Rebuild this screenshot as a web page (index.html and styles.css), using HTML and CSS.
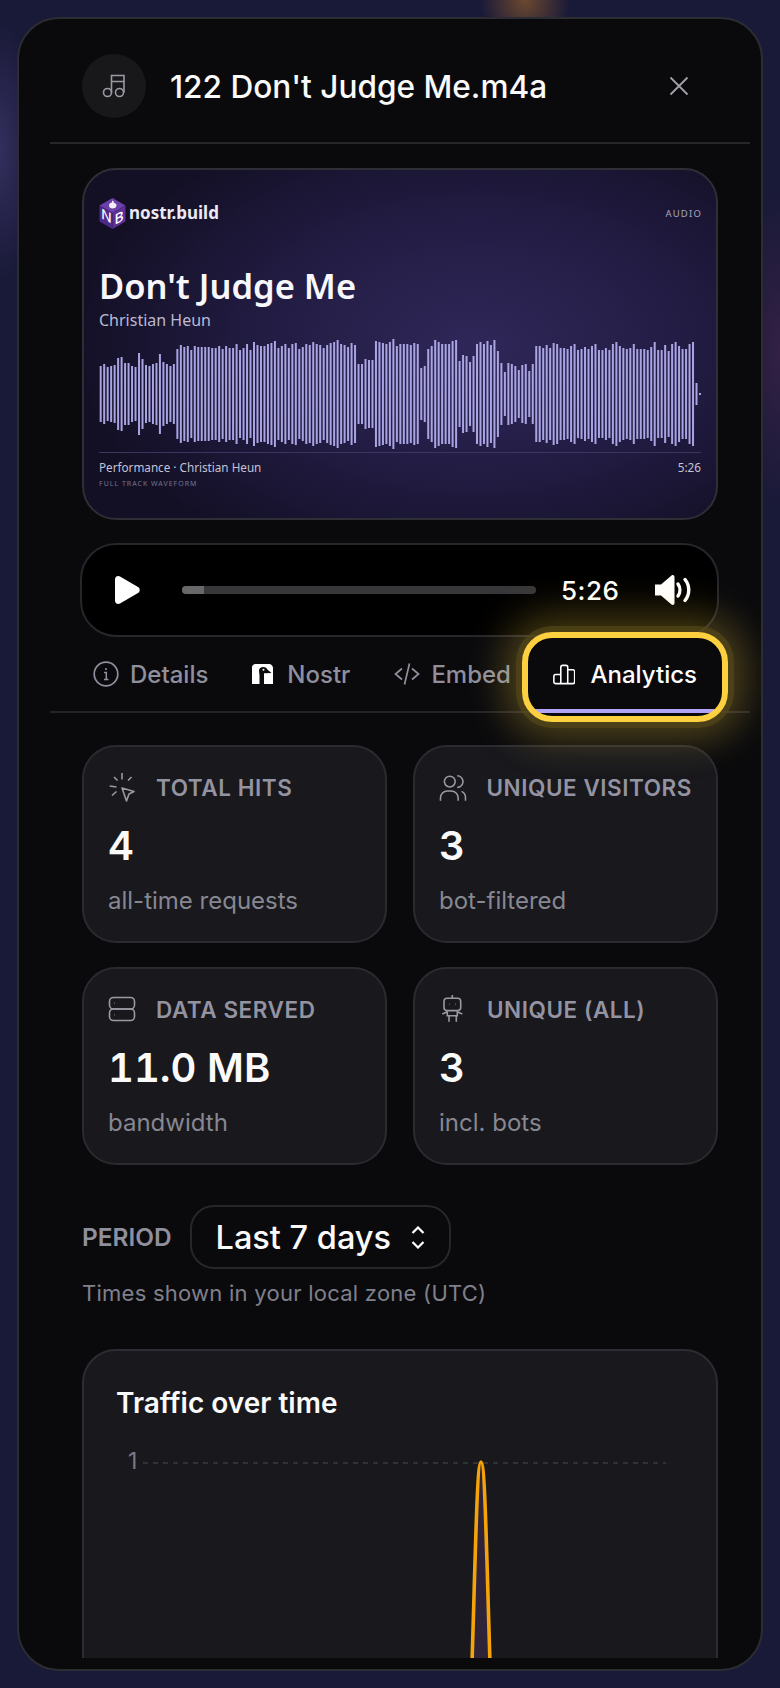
FILE: index.html
```html
<!DOCTYPE html>
<html lang="en">

<head>
    <meta charset="UTF-8">
    <meta name="viewport" content="width=device-width, initial-scale=1.0">
    <title>122 Don't Judge Me.m4a</title>
    <link rel="stylesheet" href="styles.css">
</head>

<body>
    <div class="modal">
        <div class="modal-head">
            <div class="file-icon">
                <svg width="24" height="24" viewBox="0 0 24 24" fill="none" stroke="#9a9aa3" stroke-width="1.6">
                    <circle cx="5.5" cy="18.5" r="4" />
                    <circle cx="17.5" cy="18.5" r="4" />
                    <path d="M9.5 18.5V1.5H22V18.5M9.5 7.5H22" />
                </svg>
            </div>
            <h1 class="file-name">122 Don't Judge Me.m4a</h1>
            <svg class="close" width="20" height="20" viewBox="0 0 20 20" fill="none" stroke="#a1a1aa" stroke-width="1.8">
                <path d="M1.5 1.5L18.5 18.5M18.5 1.5L1.5 18.5" />
            </svg>
        </div>

        <div class="modal-body">
            <!-- preview card -->
            <div class="preview">
                <div class="preview-top">
                    <div class="brand">
                        <svg width="27" height="31" viewBox="0 0 27 31">
                            <path d="M13.5 0L26.5 7.5L13.5 15L.5 7.5z" fill="#6d3fa8" />
                            <path d="M.5 7.5L13.5 15V31L.5 23.5z" fill="#4c2a86" />
                            <path d="M26.5 7.5L13.5 15V31L26.5 23.5z" fill="#5d2f96" />
                            <path d="M10 7.5C10 5.5 11.5 4.5 13 4.5V2.5L15 3.500 14.500 4.700C16.500 5 17.500 6 17.500 7.500 17.500 9.500 15.500 10.500 13.500 10.500S10 9.500 10 7.500z" fill="#f1eef8" />
                            <text class="logo-letter" transform="translate(2 20) skewY(28)">N</text>
                            <text class="logo-letter" transform="translate(15.500 27) skewY(-28)">B</text>
                        </svg>
                        <span>nostr.build</span>
                    </div>
                    <span class="kind">AUDIO</span>
                </div>
                <div class="track-title">Don't Judge Me</div>
                <div class="track-artist">Christian Heun</div>
                <svg id="wave" class="wave" width="604" height="114" viewBox="0 0 604 114"></svg>
                <div class="preview-foot">
                    <span>Performance · Christian Heun</span>
                    <span>5:26</span>
                </div>
                <div class="preview-note">FULL TRACK WAVEFORM</div>
            </div>

            <!-- audio player -->
            <div class="player">
                <svg class="play" width="25" height="28" viewBox="0 0 25 28">
                    <path d="M0 3.500C0 .8 2.600-.9 5 .5L23 11C25.300 12.400 25.300 15.600 23 17L5 27.500C2.600 28.900 0 27.200 0 24.500z" fill="#fff" />
                </svg>
                <div class="seek">
                    <div class="seek-done"></div>
                </div>
                <span class="time">5:26</span>
                <svg class="volume" width="37" height="30" viewBox="0 0 37 30" fill="none">
                    <path d="M0 9.500H6L16.500 .5C18 -.5 19.500 .3 19.500 2V28C19.500 29.700 18 30.500 16.500 29.500L6 20.500H0z" fill="#fff" />
                    <path d="M23 9C25.500 12.500 25.500 17.500 23 21" stroke="#fff" stroke-width="3.400" stroke-linecap="round" />
                    <path d="M30 4.500C35 10.500 35 19.500 30 25.500" stroke="#fff" stroke-width="3.400" stroke-linecap="round" />
                </svg>
            </div>

            <!-- tabs -->
            <div class="tabs">
                <div class="tab">
                    <svg width="26" height="26" viewBox="0 0 26 26" fill="none" stroke="currentColor" stroke-width="1.700">
                        <circle cx="13" cy="13" r="11.800" />
                        <path d="M11 11.500H13.300V18.500M11 18.500H15.500" stroke-width="1.500" />
                        <circle cx="13" cy="8" r="1.100" fill="currentColor" stroke="none" />
                    </svg>
                    <span>Details</span>
                </div>
                <div class="tab tab-nostr">
                    <svg width="21" height="20" viewBox="0 0 21 20">
                        <path d="M0 20V3.500C0 1.500 1.500 0 3.500 0H17C19.200 0 21 1.800 21 4V20z" fill="#fff" />
                        <path d="M7.500 20V12C7.500 10 7 8.500 7 6.500 7 4.300 9 3 11.200 3 13.400 3 15 4.200 15.600 5.800L19.500 9 12 9.200V20z" fill="#0a0a0d" />
                        <circle cx="11.500" cy="5.800" r="1" fill="#fff" />
                    </svg>
                    <span>Nostr</span>
                </div>
                <div class="tab">
                    <svg width="26" height="26" viewBox="0 0 26 26" fill="none" stroke="currentColor" stroke-width="1.700">
                        <path d="M8 7.500L1.500 13L8 18.500M18 7.500L24.500 13L18 18.500M15.500 2.500L10.500 23.500" />
                    </svg>
                    <span>Embed</span>
                </div>
                <div class="tab tab-on">
                    <svg width="26" height="23" viewBox="0 0 26 23" fill="none" stroke="#fff" stroke-width="1.800">
                        <path d="M9 11.500H3C1.800 11.500 1 12.300 1 13.500V20C1 21.200 1.800 22 3 22H23C24.200 22 25 21.200 25 20V8C25 6.800 24.200 6 23 6H17M9 22V3C9 1.800 9.800 1 11 1H15C16.200 1 17 1.800 17 3V22" />
                    </svg>
                    <span>Analytics</span>
                </div>
            </div>

            <!-- stats -->
            <div class="stats">
                <div class="stat">
                    <div class="stat-label">
                        <svg width="30" height="30" viewBox="0 0 30 30" fill="none" stroke="#9a9aa3" stroke-width="1.600">
                            <path d="M14 1V7.500M20 8.500L23.500 5M1.700 14L8.500 15M4 23.500L8.500 19.500M6 5L9.500 8.500" />
                            <path d="M14 16L26 19.500 21 22 18.500 29z" stroke-linejoin="round" />
                        </svg>
                        <span>TOTAL HITS</span>
                    </div>
                    <div class="stat-value">4</div>
                    <div class="stat-sub">all-time requests</div>
                </div>
                <div class="stat">
                    <div class="stat-label">
                        <svg width="30" height="30" viewBox="0 -2 30 30" fill="none" stroke="#9a9aa3" stroke-width="1.600">
                            <circle cx="11" cy="7.500" r="5.500" />
                            <path d="M18.500 1.500A6 6 0 0 1 18.500 13.500" />
                            <path d="M1.500 27V24A7 7 0 0 1 8.500 17H12.500A7 7 0 0 1 19.500 24V27" />
                            <path d="M23 17.500A7 7 0 0 1 27 24V27" />
                        </svg>
                        <span>UNIQUE VISITORS</span>
                    </div>
                    <div class="stat-value">3</div>
                    <div class="stat-sub">bot-filtered</div>
                </div>
                <div class="stat">
                    <div class="stat-label">
                        <svg width="30" height="30" viewBox="0 0 30 30" fill="none" stroke="#9a9aa3" stroke-width="1.600">
                            <rect x="1.500" y="3.500" width="25" height="11.500" rx="4" />
                            <rect x="1.500" y="15" width="25" height="11.500" rx="4" />
                            <path d="M6.500 9.300H7M6.500 20.800H7" />
                        </svg>
                        <span>DATA SERVED</span>
                    </div>
                    <div class="stat-value">11.0 MB</div>
                    <div class="stat-sub">bandwidth</div>
                </div>
                <div class="stat">
                    <div class="stat-label">
                        <svg width="30" height="30" viewBox="0 0 30 30" fill="none" stroke="#9a9aa3" stroke-width="1.600">
                            <rect x="5" y="4.300" width="16.700" height="12.300" rx="3" />
                            <path d="M13.300 1V4.300M8.300 16.600V21.700H18.300V16.600M3.300 20L8.300 17.700M18.300 17.700L23.300 20M10 21.700V27.700M17.300 21.700V27.700" />
                            <path d="M10 10.200H10.400M16.300 10.200H16.700" stroke-width="2" />
                        </svg>
                        <span>UNIQUE (ALL)</span>
                    </div>
                    <div class="stat-value">3</div>
                    <div class="stat-sub">incl. bots</div>
                </div>
            </div>

            <!-- period -->
            <div class="period">
                <span class="period-label">PERIOD</span>
                <div class="period-select">
                    <span>Last 7 days</span>
                    <svg width="14" height="23" viewBox="0 0 14 23" fill="none" stroke="#fff" stroke-width="2.200">
                        <path d="M1.500 7L7 1.500L12.500 7M1.500 16L7 21.500L12.500 16" />
                    </svg>
                </div>
            </div>
            <p class="zone-note">Times shown in your local zone (UTC)</p>

            <!-- chart -->
            <div class="chart-card">
                <h2 class="chart-title">Traffic over time</h2>
                <div class="plot">
                    <span class="tick">1</span>
                    <svg class="chart" width="566" height="300" viewBox="0 0 566 300">
                        <path d="M27 14H550" stroke="#3a3a42" stroke-width="1.500" stroke-dasharray="5 5" />
                        <path d="M353 300C359 150 360 13 365 13C370 13 371 150 377 300z" fill="rgba(150,90,190,.18)" />
                        <path d="M353 300C359 150 360 13 365 13C370 13 371 150 377 300" fill="none" stroke="#f5a30a" stroke-width="3.600" />
                    </svg>
                </div>
            </div>
        </div>
    </div>

    <script>
        // half height of every bar, read off the track
        var bars = [28, 30, 27, 28, 29, 36, 37, 31, 31, 28, 27, 41, 35, 29, 28, 30, 31, 40, 32, 30, 28, 30,
            45, 49, 47, 48, 44, 48, 47, 47, 47, 47, 46, 46, 48, 45, 48, 46, 46, 50, 44, 46, 50, 44, 52, 49, 48, 48, 50, 51, 53, 46, 48, 50, 46, 50, 51, 45, 47, 50, 49, 52, 50, 49, 46, 49, 51, 52, 54, 50, 49, 47, 51, 49,
            30, 30, 35, 34, 34, 53, 52, 51, 50, 52, 55, 48, 50, 50, 50, 49, 51, 50, 26, 28, 45, 48, 54, 52, 50, 50, 50, 53, 54,
            33, 39, 38, 32, 38, 50, 52, 50, 53, 49, 54, 43, 31, 22, 31, 30, 28, 24, 29, 30, 23, 30,
            48, 48, 46, 49, 46, 51, 50, 46, 46, 45, 48, 50, 44, 45, 47, 45, 48, 50, 44, 44, 46, 44, 50, 52, 48, 46, 45, 46, 50, 45, 45, 45, 44, 47, 52, 44, 44, 49, 43, 50, 52, 48, 45, 45, 50, 52, 11, 1];
        var wave = document.getElementById("wave");
        var step = 599.3 / (bars.length - 1);
        var d = "";
        for (var i = 0; i < bars.length; i++) {
            var x = (1.7 + i * step).toFixed(2);
            d += "M" + x + " " + (57 - bars[i]) + "V" + (57 + bars[i]);
        }
        var path = document.createElementNS("http://www.w3.org/2000/svg", "path");
        path.setAttribute("d", d);
        path.setAttribute("stroke", "#a9a4e2");
        path.setAttribute("stroke-width", "2");
        path.setAttribute("fill", "none");
        wave.appendChild(path);
    </script>
</body>

</html>
```

FILE: styles.css
```css
* {
    margin: 0;
    padding: 0;
    box-sizing: border-box;
}

body {
    height: 1688px;
    overflow: hidden;
    padding: 17px;
    font-family: Inter, "Liberation Sans", sans-serif;
    background-color: #191938;
    background-image:
        radial-gradient(45px 50px at 525px 0, rgba(190, 120, 40, .5), transparent),
        radial-gradient(40px 130px at 0 150px, rgba(90, 80, 150, .4), transparent),
        radial-gradient(50px 160px at 780px 350px, rgba(110, 50, 100, .3), transparent);
}

.modal {
    width: 746px;
    height: 1654px;
    display: flex;
    flex-direction: column;
    background-color: #0a0a0d;
    border: 2px solid #2c2c33;
    border-radius: 42px;
    overflow: hidden;
}

.modal-head {
    width: 700px;
    margin-left: 31px;
    padding: 35px 61px 24px 32px;
    display: flex;
    align-items: center;
    gap: 24px;
    border-bottom: 2px solid #26262b;
    flex-shrink: 0;
}

.file-icon {
    width: 64px;
    height: 64px;
    border-radius: 50%;
    background-color: #18181b;
    display: flex;
    align-items: center;
    justify-content: center;
}

.file-name {
    flex: 1;
    font-size: 31.6px;
    font-weight: 500;
    color: #fafafa;
}

.modal-body {
    flex: 1;
    min-height: 0;
    overflow: hidden;
    margin-bottom: 11px;
    padding: 24px 0 0 63px;
}

.preview {
    width: 636px;
    height: 352px;
    padding: 28px 15px 0;
    border: 2px solid #2e2e36;
    border-radius: 34px;
    font-family: "Noto Sans", sans-serif;
    background: radial-gradient(ellipse 400px 240px at 62% 50%, #2f2758 0%, #231d45 50%, #131026 100%);
}

.preview-top {
    display: flex;
    justify-content: space-between;
    align-items: center;
    height: 31px;
}

.brand {
    display: flex;
    align-items: center;
    gap: 3px;
    font-size: 17px;
    font-weight: 700;
    color: #ebe9f4;
    padding-bottom: 2px;
}

.brand svg {
    margin-top: 2px;
}

.logo-letter {
    font-family: "Noto Sans", sans-serif;
    font-size: 14px;
    font-weight: 500;
    fill: #fff;
}

.kind {
    margin-right: -1px;
    font-size: 9.5px;
    letter-spacing: 1.2px;
    color: #a9a6bf;
}

.track-title {
    margin-top: 33px;
    font-size: 34.5px;
    font-weight: 600;
    line-height: 47px;
    color: #f8f7fc;
}

.track-artist {
    font-size: 16px;
    line-height: 22px;
    color: #bcb9cf;
}

.wave {
    display: block;
    margin-top: 6px;
}

.preview-foot {
    display: flex;
    justify-content: space-between;
    border-top: 1px solid #3b3560;
    margin-top: 1px;
    padding-top: 5px;
    font-size: 11.7px;
    line-height: 18px;
    color: #c5c2d6;
}

.preview-note {
    margin-top: 2px;
    font-size: 7px;
    line-height: 12px;
    letter-spacing: 1px;
    color: #78748f;
}

.player {
    width: 639px;
    height: 94px;
    margin: 23px 0 0 -2px;
    padding-left: 33px;
    display: flex;
    align-items: center;
    background-color: #000;
    border: 2px solid #26262b;
    border-radius: 36px;
}

.seek {
    width: 354px;
    height: 8px;
    margin-left: 42px;
    border-radius: 4px;
    background-color: #37373a;
    overflow: hidden;
}

.seek-done {
    width: 22px;
    height: 100%;
    background-color: #68686b;
}

.time {
    margin-left: 25px;
    font-size: 26px;
    font-weight: 500;
    letter-spacing: .5px;
    color: #fff;
}

.volume {
    margin-left: 36px;
}

.tabs {
    width: 700px;
    height: 76px;
    margin-left: -32px;
    padding-left: 25px;
    display: flex;
    gap: 8px;
    border-bottom: 2px solid #232328;
}

.tab {
    position: relative;
    padding: 0 18px;
    display: flex;
    align-items: center;
    gap: 11px;
    font-size: 24px;
    font-weight: 500;
    color: #8f8f9d;
}

.tab-nostr {
    gap: 14px;
}

.tab-on {
    color: #fff;
    gap: 15px;
    margin-left: -2px;
    width: 180px;
    margin-bottom: -2px;
    padding-top: 3px;
    border-bottom: 4px solid #b3a4f6;
}

/* highlighted ring round the active tab */
.tab-on::after {
    content: "";
    position: absolute;
    left: -13px;
    right: -13px;
    top: -5px;
    bottom: -13px;
    border: 6px solid #fdd03f;
    border-radius: 30px;
    box-shadow: 0 0 0 6px rgba(84, 72, 24, .65), 0 0 40px 16px rgba(253, 208, 63, .3);
}

.stats {
    width: 636px;
    margin-top: 32px;
    display: grid;
    grid-template-columns: 305px 305px;
    grid-auto-rows: 198px;
    column-gap: 26px;
    row-gap: 24px;
}

.stat {
    padding: 0 24px;
    background-color: #18181d;
    border: 2px solid #2a2a30;
    border-radius: 34px;
}

.stat-label {
    display: flex;
    align-items: center;
    gap: 18px;
    margin-top: 25px;
    height: 30px;
    white-space: nowrap;
    font-size: 22.5px;
    font-weight: 600;
    letter-spacing: .55px;
    color: #9393a1;
}

.stat-value {
    margin-top: 20px;
    font-size: 40px;
    font-weight: 600;
    line-height: 48px;
    font-variant-numeric: tabular-nums;
    color: #fafafa;
}

.stat-sub {
    margin-top: 15px;
    font-size: 24px;
    line-height: 32px;
    color: #878792;
}

.period {
    margin-top: 40px;
    display: flex;
    align-items: center;
    gap: 18px;
}

.period-label {
    font-size: 24.4px;
    font-weight: 600;
    color: #8f8f9d;
}

.period-select {
    width: 261px;
    height: 64px;
    padding: 0 24px;
    display: flex;
    align-items: center;
    justify-content: space-between;
    border: 2px solid #26262b;
    border-radius: 24px;
    font-size: 32.5px;
    font-weight: 500;
    color: #fafafa;
}

.zone-note {
    margin-top: 8px;
    font-size: 22px;
    line-height: 32px;
    letter-spacing: .25px;
    color: #80808b;
}

.chart-card {
    width: 636px;
    height: 500px;
    margin-top: 40px;
    padding: 32px 0 0 32px;
    background-color: #18181d;
    border: 2px solid #2c2c33;
    border-radius: 34px;
}

.chart-title {
    font-size: 28px;
    font-weight: 600;
    line-height: 40px;
    color: #fafafa;
}

.plot {
    position: relative;
    margin-top: 26px;
}

.chart {
    display: block;
}

.tick {
    position: absolute;
    left: 12px;
    top: 0;
    font-size: 23px;
    line-height: 24px;
    color: #7a7a84;
}
```
